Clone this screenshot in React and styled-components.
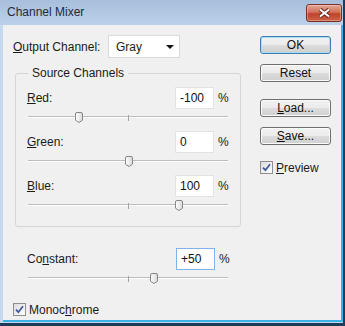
import React from 'react';
import styled, { createGlobalStyle } from 'styled-components';

const Global = createGlobalStyle`
  html, body {
    margin: 0;
    padding: 0;
    background: #ffffff;
  }
  body {
    font-family: "Liberation Sans", Arial, sans-serif;
    font-size: 12px;
    color: #1b1b1b;
  }
`;

const Window = styled.div`
  width: 345px;
  height: 326px;
  box-sizing: border-box;
  display: flex;
  flex-direction: column;
  background: #c4d8ee;
  border-right: 2px solid #1f3b5a;
  border-bottom: 3px solid #1f3b5a;
  overflow: hidden;
`;

const TitleBar = styled.div`
  height: 25px;
  flex: none;
  display: flex;
  justify-content: space-between;
  padding: 0 1px 0 7px;
  background: linear-gradient(#a7bfdc, #bbd1ea);
`;

const Title = styled.span`
  line-height: 25px;
  font-size: 12px;
  color: #1e2a3c;
`;

const CloseButton = styled.div`
  width: 34px;
  height: 16px;
  margin-top: 4px;
  border: 1px solid #7b2f22;
  border-radius: 3px;
  background: linear-gradient(#e3a797, #d27058 45%, #c0432c 55%, #cb6246);
  box-shadow: inset 0 0 0 1px rgba(255, 255, 255, 0.3);
  display: flex;
  align-items: center;
  justify-content: center;
`;

const Client = styled.div`
  flex: 1;
  margin: 0 0 1px 3px;
  background: #f0f0f0;
  border-right: 2px solid #3bb2e4;
  border-bottom: 2px solid #3bb2e4;
  display: flex;
  padding: 10px 0 0 10px;
`;

const LeftColumn = styled.div`
  width: 228px;
  display: flex;
  flex-direction: column;
`;

const RightColumn = styled.div`
  width: 71px;
  margin-left: 19px;
  display: flex;
  flex-direction: column;
`;

const Key = styled.span`
  text-decoration: underline;
  text-underline-offset: 1px;
`;

const OutputRow = styled.div`
  display: flex;
  align-items: center;
  height: 23px;
`;

const OutputLabel = styled.span`
  width: 95px;
`;

const Select = styled.div`
  box-sizing: border-box;
  width: 72px;
  height: 23px;
  background: #ffffff;
  border: 1px solid #dadada;
  display: flex;
  align-items: center;
  justify-content: space-between;
  padding: 0 5px 0 7px;
`;

const Caret = styled.span`
  width: 0;
  height: 0;
  border-left: 4px solid transparent;
  border-right: 4px solid transparent;
  border-top: 4px solid #111;
`;

const Group = styled.fieldset`
  box-sizing: border-box;
  width: 226px;
  margin: 8px 0 0 2px;
  padding: 7px 11px 7px 11px;
  border: 1px solid #d5d5d5;
  border-radius: 3px;
  display: flex;
  flex-direction: column;
`;

const Legend = styled.legend`
  padding: 0 4px;
  margin-left: 1px;
  line-height: 14px;
`;

const Block = styled.div`
  display: flex;
  flex-direction: column;
  padding: ${p => (p.$outside ? '0 11px 0 14px' : '0')};
  margin-top: ${p => p.$top || 0}px;
`;

const ValueRow = styled.div`
  display: flex;
  align-items: center;
  height: 22px;
`;

const RowLabel = styled.span`
  flex: 1;
`;

const Field = styled.input`
  box-sizing: border-box;
  width: 39px;
  height: 22px;
  margin: 0;
  padding: 0 0 0 4px;
  font: inherit;
  color: #111;
  background: #ffffff;
  border: 1px solid ${p => (p.$focused ? '#7eb4ea' : '#e2e2e2')};
  outline: none;
`;

const Percent = styled.span`
  margin-left: 4px;
  width: 11px;
`;

const SliderBox = styled.div`
  position: relative;
  width: 200px;
  height: 22px;
  margin-left: 1px;
`;

const Track = styled.div`
  margin-top: 7px;
  height: 1px;
  background: #bdbdbd;
  border-bottom: 1px solid #ffffff;
`;

const Tick = styled.div`
  position: absolute;
  left: 100px;
  top: 6px;
  width: 1px;
  height: 6px;
  background: #a3a3a3;
`;

const Thumb = styled.svg`
  position: absolute;
  top: 3px;
  width: 8px;
  height: 11px;
`;

const CheckRow = styled.label`
  display: flex;
  align-items: center;
  height: 13px;
  margin-top: ${p => p.$top || 0}px;
`;

const Box = styled.span`
  box-sizing: border-box;
  width: 13px;
  height: 13px;
  border: 1px solid #8f8f8f;
  background: linear-gradient(135deg, #dcdcdc, #ffffff);
  display: flex;
  align-items: center;
  justify-content: center;
  margin-right: 3px;
`;

const Button = styled.div`
  box-sizing: border-box;
  height: 18px;
  margin-top: ${p => p.$top || 0}px;
  border: 1px solid ${p => (p.$default ? '#3c7fb1' : '#707070')};
  border-radius: 3px;
  background: linear-gradient(#f2f2f2, #ebebeb 50%, #dddddd 50%, #cfcfcf);
  box-shadow: inset 0 0 0 1px ${p => (p.$default ? '#a8dcf5' : '#fbfbfb')};
  display: flex;
  align-items: center;
  justify-content: center;
  color: #111;
`;

const channels = [
  { key: 'R', rest: 'ed:', value: -100 },
  { key: 'G', rest: 'reen:', value: 0 },
  { key: 'B', rest: 'lue:', value: 100 },
];

const thumbLeft = v => Math.round(((v + 200) / 400) * 200) - 3;

function Slider({ value }) {
  return (
    <SliderBox>
      <Track />
      <Tick />
      <Thumb viewBox="0 0 8 11" style={{ left: thumbLeft(value) }}>
        <defs>
          <linearGradient id="tg" x1="0" x2="1" y1="0" y2="0">
            <stop offset="0" stopColor="#ffffff" />
            <stop offset="1" stopColor="#d9d9d9" />
          </linearGradient>
        </defs>
        <path
          d="M0.5 2 Q0.5 0.5 2 0.5 H6 Q7.5 0.5 7.5 2 V8.2 L4 10.5 L0.5 8.2 Z"
          fill="url(#tg)"
          stroke="#868686"
        />
      </Thumb>
    </SliderBox>
  );
}

function Check() {
  return (
    <Box>
      <svg width="9" height="9" viewBox="0 0 9 9">
        <path d="M1 4.6 L3.4 7.2 L8 1.2" fill="none" stroke="#3e5a9a" strokeWidth="1.8" />
      </svg>
    </Box>
  );
}

export default function App() {
  return (
    <>
      <Global />
      <Window>
        <TitleBar>
          <Title>Channel Mixer</Title>
          <CloseButton>
            <svg width="13" height="10" viewBox="0 0 13 10">
              <path d="M2 1.5 L11 8.5 M11 1.5 L2 8.5" stroke="#6a2a20" strokeWidth="4" />
              <path d="M2 1.5 L11 8.5 M11 1.5 L2 8.5" stroke="#ffffff" strokeWidth="2" />
            </svg>
          </CloseButton>
        </TitleBar>
        <Client>
          <LeftColumn>
            <OutputRow>
              <OutputLabel>
                <Key>O</Key>utput Channel:
              </OutputLabel>
              <Select>
                <span>Gray</span>
                <Caret />
              </Select>
            </OutputRow>

            <Group>
              <Legend>Source Channels</Legend>
              {channels.map(c => (
                <Block key={c.key}>
                  <ValueRow>
                    <RowLabel>
                      <Key>{c.key}</Key>
                      {c.rest}
                    </RowLabel>
                    <Field readOnly value={String(c.value)} />
                    <Percent>%</Percent>
                  </ValueRow>
                  <Slider value={c.value} />
                </Block>
              ))}
            </Group>

            <Block $outside $top={21}>
              <ValueRow>
                <RowLabel>
                  Co<Key>n</Key>stant:
                </RowLabel>
                <Field readOnly $focused value="+50" />
                <Percent>%</Percent>
              </ValueRow>
              <Slider value={50} />
            </Block>

            <CheckRow $top={11}>
              <Check />
              <span>
                Monoc<Key>h</Key>rome
              </span>
            </CheckRow>
          </LeftColumn>

          <RightColumn>
            <Button $default $top={1}>OK</Button>
            <Button $top={10}>Reset</Button>
            <Button $top={17}>
              <span>
                <Key>L</Key>oad...
              </span>
            </Button>
            <Button $top={10}>
              <span>
                <Key>S</Key>ave...
              </span>
            </Button>
            <CheckRow $top={16}>
              <Check />
              <span>
                <Key>P</Key>review
              </span>
            </CheckRow>
          </RightColumn>
        </Client>
      </Window>
    </>
  );
}
